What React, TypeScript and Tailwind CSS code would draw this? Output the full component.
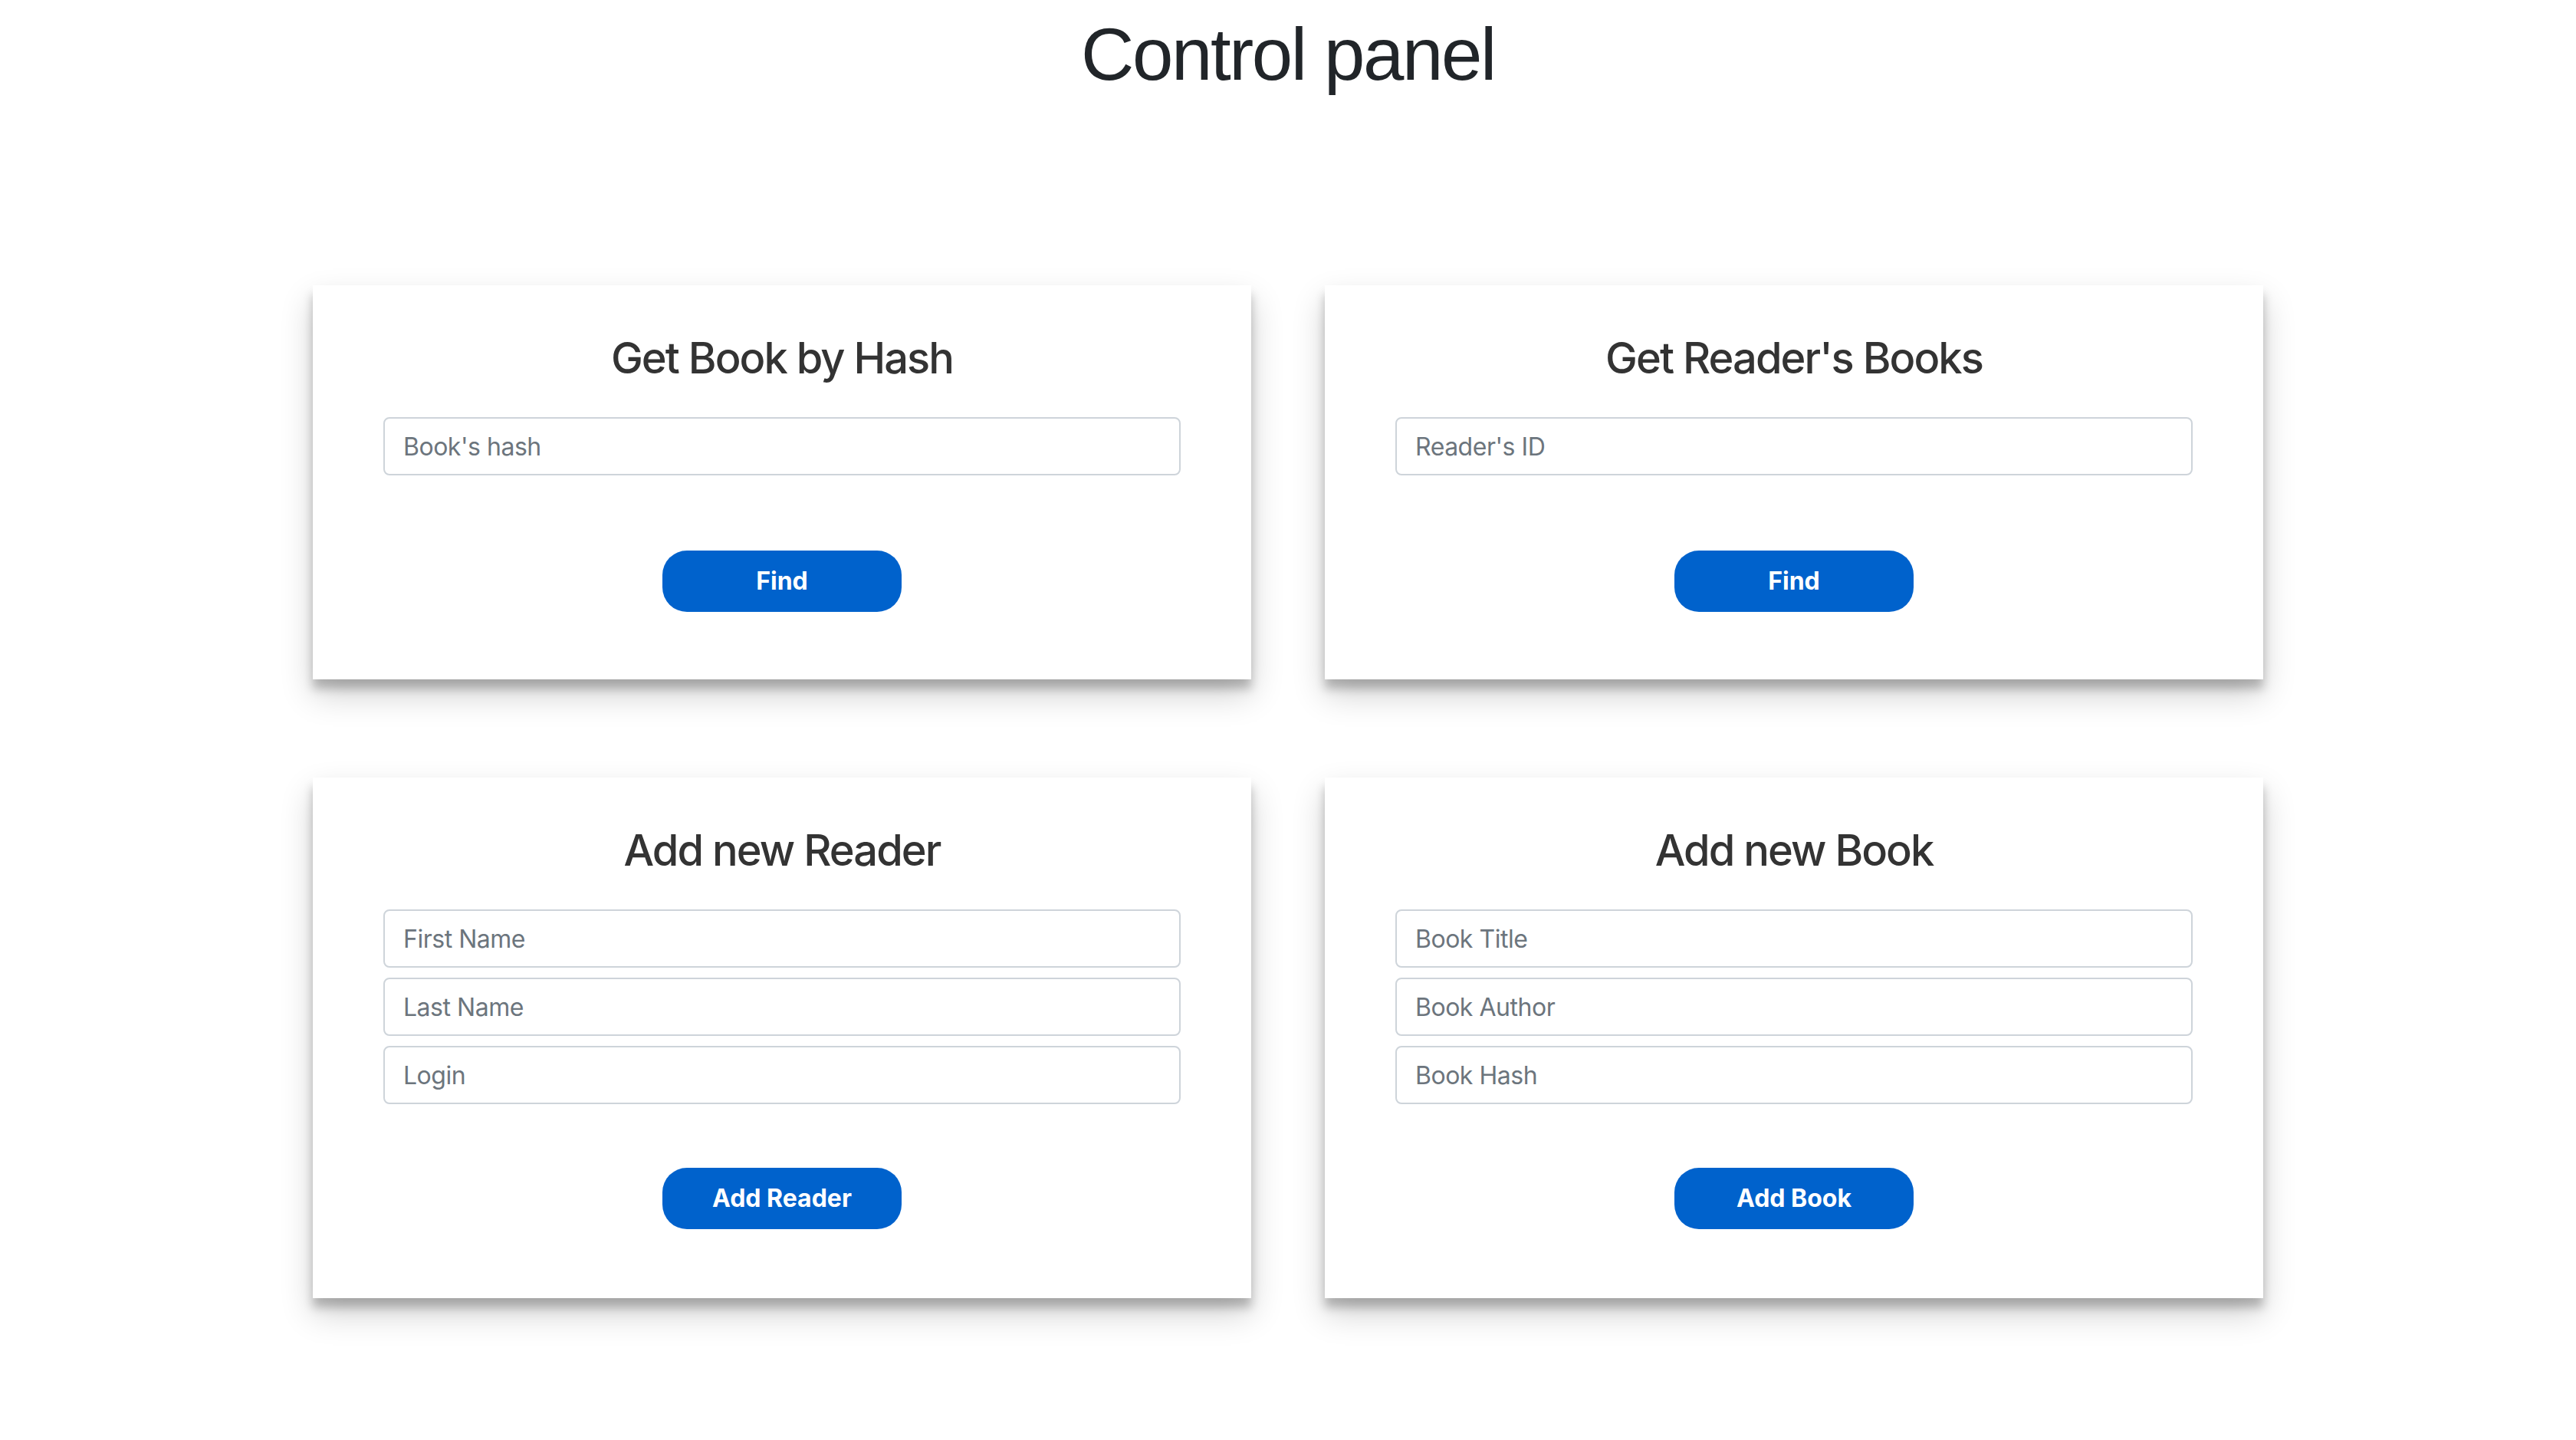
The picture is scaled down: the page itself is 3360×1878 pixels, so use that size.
import React, { useState } from 'react';

interface PanelCardProps {
  title: string;
  fields: string[];
  action: string;
  spacing: string;
}

const PanelCard: React.FC<PanelCardProps> = ({ title, fields, action, spacing }) => {
  const [values, setValues] = useState<string[]>(fields.map(() => ''));

  return (
    <div className={`${spacing} w-[1224px] bg-white px-[92px] pt-[67px] flex flex-col items-center shadow-[0_20px_40px_rgba(0,0,0,0.19),0_12px_12px_rgba(0,0,0,0.23)]`}>
      <h3 className="text-[56px] leading-none font-medium text-[#333333] tracking-[-0.035em]">{title}</h3>
      <div className="w-full mt-[49px] flex flex-col gap-[13px]">
        {fields.map((field, idx) => (
          <input
            key={field}
            type="text"
            placeholder={field}
            value={values[idx]}
            onChange={(e) => setValues(values.map((v, i) => (i === idx ? e.target.value : v)))}
            className="w-full h-[76px] px-[24px] bg-white border-2 border-[#ced4da] rounded-[8px] text-[32px] tracking-[-0.015em] text-[#495057] placeholder:text-[#6c757d] outline-none"
          />
        ))}
      </div>
      <button
        type="button"
        className="btn-gap w-[312px] h-[80px] rounded-[32px] bg-[#0062cc] text-white text-[32px] font-bold"
      >
        {action}
      </button>
    </div>
  );
};

export default function App() {
  return (
    <div className="min-h-screen bg-white pb-[100px]" style={{ fontFamily: 'Inter, "Noto Sans", sans-serif' }}>
      <h1
        className="pt-[23px] text-center text-[96px] leading-none font-normal text-[#212529] tracking-[-0.025em]"
        style={{ fontFamily: '"Liberation Sans", Arial, sans-serif' }}
      >
        Control panel
      </h1>

      {/* Cards */}
      <div className="mt-[253px] grid grid-cols-[1224px_1224px] justify-center gap-x-[96px] gap-y-[128px]">
        <PanelCard title="Get Book by Hash" fields={["Book's hash"]} action="Find" spacing="pb-[88px] [&_.btn-gap]:mt-[98px]" />
        <PanelCard title="Get Reader's Books" fields={["Reader's ID"]} action="Find" spacing="pb-[88px] [&_.btn-gap]:mt-[98px]" />
        <PanelCard title="Add new Reader" fields={['First Name', 'Last Name', 'Login']} action="Add Reader" spacing="pb-[90px] [&_.btn-gap]:mt-[83px]" />
        <PanelCard title="Add new Book" fields={['Book Title', 'Book Author', 'Book Hash']} action="Add Book" spacing="pb-[90px] [&_.btn-gap]:mt-[83px]" />
      </div>
    </div>
  );
}
